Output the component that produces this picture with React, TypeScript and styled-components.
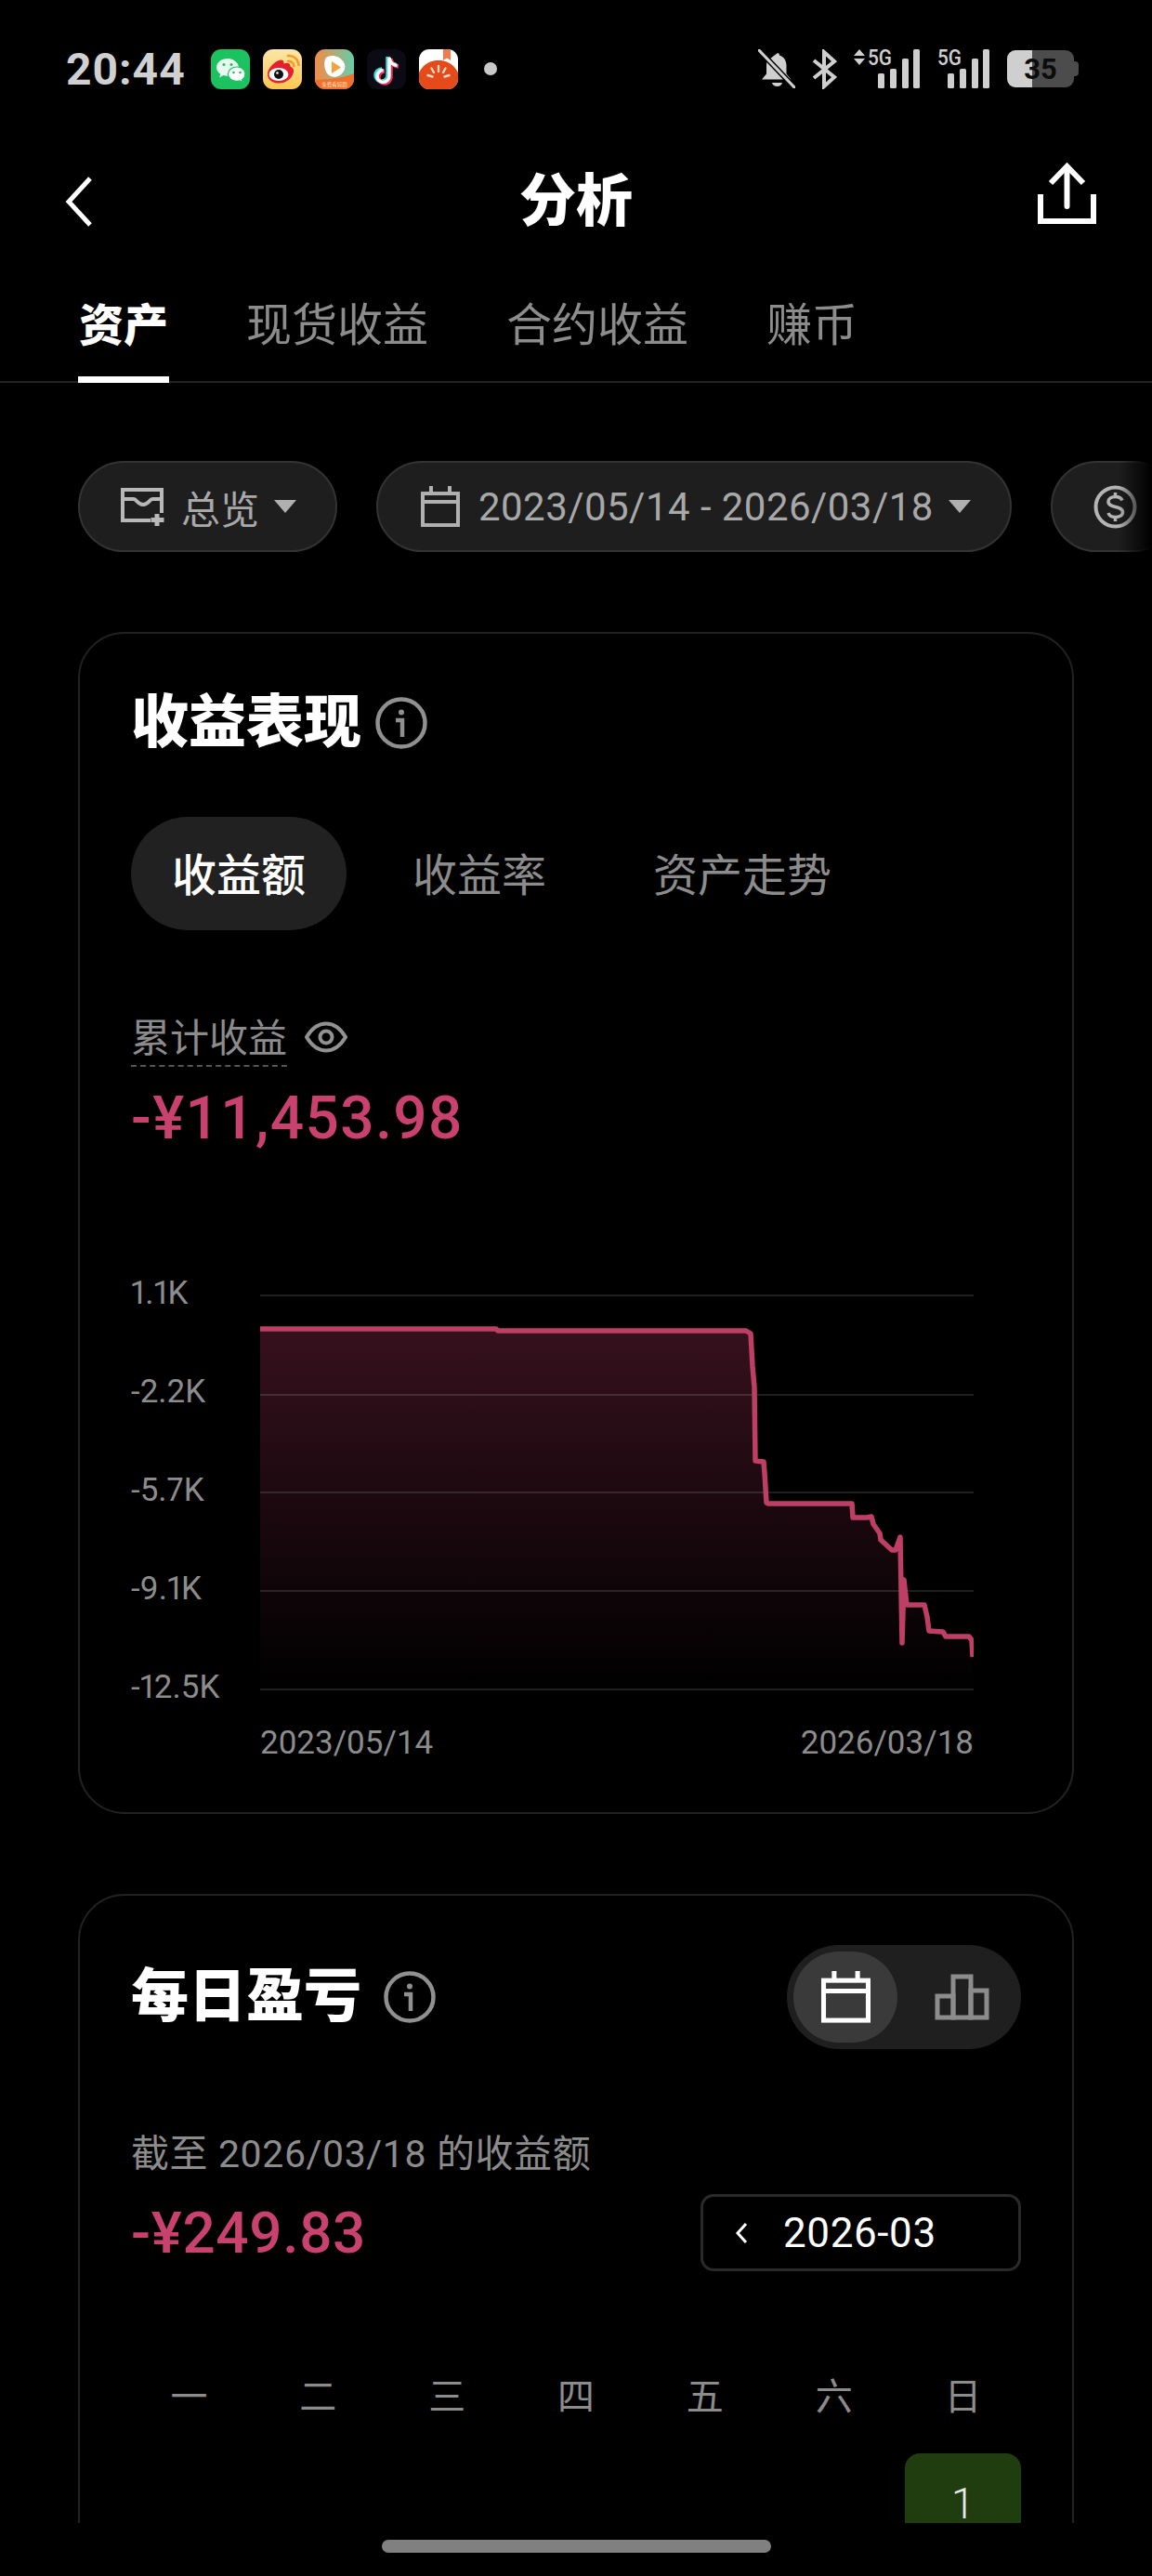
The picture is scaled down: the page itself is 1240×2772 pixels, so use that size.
import React from 'react';
import styled, { createGlobalStyle } from 'styled-components';

const GlobalStyle = createGlobalStyle`
  html, body {
    margin: 0;
    padding: 0;
    background: #000;
  }
  body {
    font-family: Roboto, "Noto Sans CJK SC", sans-serif;
    color: #fff;
  }
  * {
    box-sizing: border-box;
  }
`;

const Page = styled.div`
  display: flex;
  flex-direction: column;
  width: 1240px;
  height: 2772px;
  overflow: hidden;
  background: #000;
`;

const StatusBar = styled.div`
  display: flex;
  flex: none;
  align-items: center;
  justify-content: space-between;
  height: 148px;
  padding: 0 79px 0 71px;
`;

const StatusLeft = styled.div`
  display: flex;
  align-items: center;
`;

const Time = styled.span`
  margin-right: 27px;
  color: #d0d0d0;
  font-size: 48px;
  font-weight: 700;
  letter-spacing: 1px;
`;

const AppIcons = styled.div`
  display: flex;
  gap: 14px;
`;

const MoreDot = styled.span`
  width: 14px;
  height: 14px;
  margin-left: 28px;
  border-radius: 50%;
  background: #c8c8c8;
`;

const StatusRight = styled.div`
  display: flex;
  align-items: center;
  gap: 18px;
  color: #cfcfcf;
`;

const Battery = styled.div`
  position: relative;
  display: flex;
  align-items: center;
  justify-content: center;
  width: 72px;
  height: 40px;
  margin-right: 5px;
  border-radius: 9px;
  background: linear-gradient(90deg, #cfcfcf 0 27px, #4c4c4c 27px 100%);
  color: #0c0c0c;
  font-size: 31px;
  font-weight: 700;

  &::after {
    content: '';
    position: absolute;
    top: 12px;
    right: -5px;
    width: 5px;
    height: 16px;
    border-radius: 0 4px 4px 0;
    background: #4c4c4c;
  }
`;

const Header = styled.div`
  display: grid;
  flex: none;
  grid-template-columns: 1fr auto 1fr;
  align-items: center;
  height: 138px;
  padding: 0 60px;
`;

const BackButton = styled.div`
  height: 56px;
  margin-left: 10px;
`;

const Title = styled.h1`
  margin: 0;
  font-size: 61px;
  font-weight: 900;
  line-height: 70px;
`;

const ShareButton = styled.div`
  justify-self: end;
  height: 66px;
  margin-bottom: 19px;
`;

const TabBar = styled.div`
  display: flex;
  flex: none;
  gap: 84px;
  height: 126px;
  padding-left: 85px;
  border-bottom: 2px solid #232323;
`;

const Tab = styled.div<{ $active?: boolean }>`
  position: relative;
  height: 126px;
  padding-top: 37px;
  color: ${(p) => (p.$active ? '#fff' : '#8c8c8c')};
  font-size: ${(p) => (p.$active ? 48 : 49)}px;
  font-weight: ${(p) => (p.$active ? 900 : 400)};
  line-height: 56px;

  ${(p) => p.$active && `
    &::after {
      content: '';
      position: absolute;
      left: -1px;
      right: -1px;
      bottom: 0;
      height: 7px;
      background: #fff;
    }
  `}
`;

const Content = styled.div`
  flex: 1;
  min-height: 0;
  overflow: hidden;
`;

const FilterRow = styled.div`
  position: relative;
  display: flex;
  gap: 42px;
  height: 98px;
  margin-top: 84px;
  padding-left: 84px;
  overflow: hidden;

  &::after {
    content: '';
    position: absolute;
    top: 0;
    right: 0;
    bottom: 0;
    width: 36px;
    background: linear-gradient(90deg, rgba(0, 0, 0, 0), #000);
  }
`;

const Pill = styled.div<{ $lead?: number }>`
  display: flex;
  flex: none;
  align-items: center;
  height: 98px;
  padding: 0 42px 0 ${(p) => p.$lead ?? 44}px;
  border: 2px solid #333;
  border-radius: 49px;
  background: #1e1e1e;
  color: #a8a8a8;
  font-size: 42px;
  white-space: nowrap;
`;

const PillLabel = styled.span<{ $gap: number; $spacing?: number }>`
  margin: 0 16px 0 ${(p) => p.$gap}px;
  letter-spacing: ${(p) => p.$spacing ?? 0}px;
`;

const Caret = styled.span`
  width: 0;
  height: 0;
  border-left: 12px solid transparent;
  border-right: 12px solid transparent;
  border-top: 14px solid #b0b0b0;
`;

const Card = styled.section<{ $height: number }>`
  width: 1072px;
  height: ${(p) => p.$height}px;
  margin: 86px 0 0 84px;
  padding: 0 55px;
  border: 2px solid #222;
  border-radius: 50px;
`;

const CardTitleRow = styled.div`
  display: flex;
  align-items: center;
  gap: 15px;
  height: 64px;
  margin-top: 64px;
`;

const CardTitle = styled.h2`
  margin: 0;
  font-size: 62px;
  font-weight: 900;
  line-height: 64px;
`;

const Segments = styled.div`
  display: flex;
  gap: 27px;
  margin-top: 69px;
`;

const Segment = styled.div<{ $active?: boolean }>`
  height: 122px;
  padding: 0 44px;
  border-radius: 61px;
  background: ${(p) => (p.$active ? '#212121' : 'transparent')};
  color: ${(p) => (p.$active ? '#fff' : '#8c8c8c')};
  font-size: 48px;
  font-weight: ${(p) => (p.$active ? 500 : 400)};
  line-height: 127px;
`;

const LabelRow = styled.div`
  display: flex;
  align-items: center;
  gap: 19px;
  height: 44px;
  margin-top: 93px;
`;

const DashedLabel = styled.span`
  padding-bottom: 5px;
  border-bottom: 2px dashed #555;
  color: #8c8c8c;
  font-size: 42px;
  line-height: 46px;
  transform: translateY(5px);
`;

const Amount = styled.div<{ $size: number }>`
  color: #c9416e;
  font-size: ${(p) => p.$size}px;
  font-weight: 500;
  letter-spacing: 0.7px;
  line-height: 70px;
`;

const HeroAmount = styled(Amount)`
  margin-top: 31px;
  letter-spacing: 1.4px;
`;

const Chart = styled.div`
  display: grid;
  grid-template-columns: 139px 768px;
  margin-top: 151px;
`;

const YAxis = styled.div`
  display: flex;
  flex-direction: column;
  justify-content: space-between;
  margin: -18px 0 -16px;
  color: #8c8c8c;
  font-size: 35px;
  font-variant-numeric: proportional-nums;
  line-height: 40px;
`;

const Plot = styled.svg`
  display: block;
`;

const XAxis = styled.div`
  display: flex;
  justify-content: space-between;
  width: 768px;
  margin: 34px 0 0 139px;
  color: #8c8c8c;
  font-size: 35px;
  line-height: 44px;
`;

const DailyHeader = styled.div`
  display: flex;
  align-items: center;
  justify-content: space-between;
  margin-top: 53px;
`;

const DailyTitle = styled.div`
  display: flex;
  align-items: center;
  gap: 24px;
`;

const ViewToggle = styled.div`
  display: flex;
  align-items: center;
  width: 252px;
  height: 112px;
  padding: 7px;
  border-radius: 56px;
  background: #1f1f1f;
`;

const ToggleItem = styled.div<{ $active?: boolean }>`
  display: flex;
  align-items: center;
  justify-content: center;
  width: ${(p) => (p.$active ? 112 : 126)}px;
  height: 98px;
  padding-left: ${(p) => (p.$active ? 0 : 12)}px;
  border-radius: 49px;
  background: ${(p) => (p.$active ? '#3a3a3a' : 'transparent')};
  color: ${(p) => (p.$active ? '#fff' : '#8c8c8c')};
`;

const AsOf = styled.div`
  margin-top: 91px;
  color: #8c8c8c;
  font-size: 41px;
  letter-spacing: 0.6px;
  line-height: 44px;
`;

const SummaryRow = styled.div`
  display: flex;
  align-items: center;
  justify-content: space-between;
  height: 83px;
  margin-top: 21px;
`;

const MonthPicker = styled.div`
  display: flex;
  align-items: center;
  gap: 38px;
  width: 345px;
  height: 83px;
  padding-left: 34px;
  border: 3px solid #2a2a2a;
  border-radius: 14px;
  color: #fff;
  font-size: 44px;
  letter-spacing: 0.6px;
`;

const CalendarGrid = styled.div`
  display: grid;
  grid-template-columns: repeat(7, 1fr);
  column-gap: 14px;
  margin-top: 114px;
`;

const Weekday = styled.div`
  color: #8c8c8c;
  font-size: 40px;
  line-height: 44px;
  text-align: center;
`;

const DayCell = styled.div`
  grid-column: 7;
  height: 130px;
  margin-top: 38px;
  padding-top: 35px;
  border-radius: 16px;
  background: #1f3d0f;
  color: #e8e8e8;
  font-size: 46px;
  font-weight: 300;
  line-height: 38px;
  text-align: center;
`;

const HomeArea = styled.div`
  display: flex;
  flex: none;
  justify-content: center;
  height: 57px;
  padding-top: 18px;
`;

const HomeBar = styled.div`
  width: 419px;
  height: 14px;
  border-radius: 7px;
  background: #808080;
`;

const WeChatIcon = () => (
  <svg width={42} height={43} viewBox="0 0 42 43">
    <rect width={42} height={43} rx={11} fill="#1cc25f" />
    <path d="M18 10c-6.600 0-12 4.200-12 9.600 0 3 1.700 5.500 4.200 7.200l-1 3.600 4.200-2.300c1.400.4 2.900.6 4.600.6 6.600 0 12-4.400 12-9.100S24.600 10 18 10z" fill="#e9f9ef" />
    <path d="M28 19c-5.300 0-9.600 3.400-9.600 7.700s4.300 7.700 9.600 7.700c1.100 0 2.200-.2 3.200-.5l3.200 1.800-.8-2.900c2-1.400 3.400-3.600 3.400-6.100 0-4.300-3.700-7.700-9-7.700z" fill="#fff" stroke="#1cc25f" strokeWidth={1.200} />
    <circle cx={14} cy={16.500} r={1.500} fill="#1cc25f" />
    <circle cx={22} cy={16.500} r={1.500} fill="#1cc25f" />
    <circle cx={24.500} cy={25} r={1.300} fill="#1cc25f" />
    <circle cx={31.500} cy={25} r={1.300} fill="#1cc25f" />
  </svg>
);

const WeiboIcon = () => (
  <svg width={42} height={43} viewBox="0 0 42 43">
    <defs>
      <linearGradient id="weiboBg" x1="0" y1="0" x2="0" y2="1">
        <stop offset="0" stopColor="#fbe7a8" />
        <stop offset="1" stopColor="#fcc64f" />
      </linearGradient>
    </defs>
    <rect width={42} height={43} rx={11} fill="url(#weiboBg)" />
    <path d="M5 27c0-6 6-12 11-14.500 4-2 7-1 6.500 3 4-1.500 7.500-.5 7 3 2.500 1 4 3 3.500 6C31.500 32 24 37 16 36.500 9 36 5 32 5 27z" fill="#e4202c" />
    <ellipse cx={17} cy={27} rx={10.500} ry={7} fill="#fff" />
    <circle cx={17} cy={27} r={5} fill="#111" />
    <circle cx={15.500} cy={25.500} r={1.300} fill="#fff" />
    <path d="M27 13c3-.5 6 1.500 6.500 5M27 7c6-.5 11 3.500 11.500 10" fill="none" stroke="#f49a23" strokeWidth={2.600} strokeLinecap="round" />
  </svg>
);

const VideoIcon = () => (
  <svg width={42} height={43} viewBox="0 0 42 43">
    <defs>
      <linearGradient id="videoBg" x1="0" y1="0" x2="1" y2="0">
        <stop offset="0" stopColor="#f58b45" />
        <stop offset="1" stopColor="#66cdaa" />
      </linearGradient>
      <clipPath id="videoClip">
        <rect width={42} height={43} rx={11} />
      </clipPath>
    </defs>
    <g clipPath="url(#videoClip)">
      <rect width={42} height={43} fill="url(#videoBg)" />
      <path d="M0 33c10-1 24 0 42-7v17H0z" fill="#f0702c" />
      <path d="M12 9c5-4 15-2 19 5 3 5 1 10-4 14-5 3-11 2-14-2-3-5-4-13-1-17z" fill="#fff" />
      <path d="M18 13l10 6.500-10 6.500z" fill="#f6a03f" />
      <text x={21} y={40} fontSize={5.500} fill="#ffe3c8" textAnchor="middle">免费看短剧</text>
    </g>
  </svg>
);

const TikTokIcon = () => {
  const note = 'M24 9v20a6.500 6.500 0 1 1-6.500-6.500M24 9c.8 5 4 8 8.500 8.500';
  return (
    <svg width={42} height={43} viewBox="0 0 42 43">
      <rect width={42} height={43} rx={11} fill="#0b0b14" />
      <path d={note} transform="translate(-1.500 -1)" fill="none" stroke="#3fd6dc" strokeWidth={4.500} />
      <path d={note} transform="translate(1.500 1)" fill="none" stroke="#f0305a" strokeWidth={4.500} />
      <path d={note} fill="none" stroke="#fff" strokeWidth={3.500} />
    </svg>
  );
};

const TomatoIcon = () => (
  <svg width={42} height={43} viewBox="0 0 42 43">
    <defs>
      <clipPath id="tomatoClip">
        <rect width={42} height={43} rx={11} />
      </clipPath>
    </defs>
    <g clipPath="url(#tomatoClip)">
      <rect width={42} height={43} fill="#fff" />
      <path d="M0 25C6 14 14 12 21 12s15 2 21 13v18H0z" fill="#e54a1a" />
      <path d="M26 0h8v12l-4-2.500-4 2.500z" fill="#ef7d4a" />
      <path d="M21 18v6M13.500 20.500l2.500 4.500M28.500 20.500L26 25M9.500 28l5 1.500M32.500 28l-5 1.500" stroke="#ffd9c4" strokeWidth={2.400} strokeLinecap="round" />
    </g>
  </svg>
);

const BellOffIcon = () => (
  <svg width={40} height={42} viewBox="0 0 40 42" fill="currentColor">
    <path d="M21 4c1 0 2 1 2 2.500 5 1.500 7.500 6 7.500 11v9l5 6H4l5-6V17c0-1.500.3-3 .8-4.500z" />
    <path d="M15 36h11c-.5 2.500-3 4-5.500 4s-5-1.500-5.500-4z" />
    <path d="M1 1l38 40" stroke="#000" strokeWidth={6} />
    <path d="M1 1l38 40" stroke="currentColor" strokeWidth={3} strokeLinecap="round" />
  </svg>
);

const BluetoothIcon = () => (
  <svg width={27} height={43} viewBox="0 0 27 43" fill="none" stroke="currentColor" strokeWidth={4}>
    <path d="M2 12l22 18-11 10V3l11 10L2 31" />
  </svg>
);

const SignalGlyph = styled.svg`
  margin-top: -6px;
`;

const SignalIcon = ({ withArrows }: { withArrows?: boolean }) => {
  const left = withArrows ? 26 : 11;
  return (
    <SignalGlyph width={left + 46} height={48} viewBox={`0 -6 ${left + 46} 48`} fill="currentColor">
      {withArrows && <path d="M6 0l6 7H0zM6 17l6-7H0z" />}
      {[[0, 26], [13, 21], [26, 10], [38, 0]].map(([x, y]) => (
        <rect key={x} x={left + x} y={y} width={7} height={42 - y} rx={1.500} />
      ))}
      <text x={withArrows ? 15 : 0} y={17} fontFamily="Roboto, sans-serif" fontSize={23} fontWeight={500} textLength={26} lengthAdjust="spacingAndGlyphs">5G</text>
    </SignalGlyph>
  );
};

const BackIcon = () => (
  <svg width={30} height={56} viewBox="0 0 30 56" fill="none" stroke="#fff" strokeWidth={5}>
    <path d="M27 3L4 28l23 25" />
  </svg>
);

const ShareIcon = () => (
  <svg width={63} height={66} viewBox="0 0 63 66" fill="none" stroke="#fff" strokeWidth={6}>
    <path d="M3 34v29h57V34" />
    <path d="M31.500 47V5" strokeLinecap="round" />
    <path d="M14 22L31.500 4 49 22" />
  </svg>
);

const PortfolioIcon = () => (
  <svg width={48} height={42} viewBox="0 0 48 42" fill="none" stroke="#b8b8b8" strokeWidth={4}>
    <path d="M44 28V3H2v33h30" />
    <path d="M2 13h12c3 0 4 6 10 6s7-6 10-6h10" />
    <path d="M39 29v13M32.500 35.500h14" strokeWidth={5} />
  </svg>
);

const CalendarIcon = ({ size, color }: { size: number; color: string }) => (
  <svg width={size} height={size * 1.05} viewBox="0 0 42 44" fill="none" stroke={color} strokeWidth={4}>
    <rect x={2} y={8} width={38} height={34} />
    <path d="M2 17h38M11 0v9M31 0v9" />
  </svg>
);

const DollarIcon = () => (
  <svg width={47} height={47} viewBox="0 0 47 47" fill="none" stroke="#b4b4b4">
    <circle cx={23.500} cy={23.500} r={21} strokeWidth={4} />
    <path d="M31 16.500c-1-2.500-4-4-7.500-4-4 0-7.500 2-7.500 5.500 0 7.500 15.500 3.500 15.500 11 0 3.500-3.500 5.500-8 5.500-3.500 0-6.500-1.500-7.500-4.500M23.500 8v4.500M23.500 34.500V39" strokeWidth={3.500} />
  </svg>
);

const InfoIcon = ({ size }: { size: number }) => (
  <svg width={size} height={size} viewBox="0 0 56 56" fill="none" stroke="#909090" strokeWidth={4.500}>
    <circle cx={28} cy={28} r={25.500} />
    <circle cx={28} cy={16.500} r={3} fill="#909090" stroke="none" />
    <path d="M22 25h7v18" />
  </svg>
);

const EyeIcon = () => (
  <svg width={46} height={34} viewBox="0 0 46 34" fill="none" stroke="#929292" strokeWidth={4}>
    <path d="M2 17C8 7 15 2.500 23 2.500S38 7 44 17c-6 10-13 14.500-21 14.500S8 27 2 17z" />
    <circle cx={23} cy={17} r={6.500} />
  </svg>
);

const BarsIcon = () => (
  <svg width={59} height={50} viewBox="0 0 59 50" fill="none" stroke="currentColor" strokeWidth={5}>
    <rect x={3} y={24} width={17} height={23} />
    <rect x={20} y={3} width={19} height={44} />
    <rect x={39} y={18} width={17} height={29} />
  </svg>
);

const ChevronLeftIcon = () => (
  <svg width={14} height={24} viewBox="0 0 14 24" fill="none" stroke="#fff" strokeWidth={3}>
    <path d="M12 2L3 12l9 10" />
  </svg>
);

const tabs = ['资产', '现货收益', '合约收益', '赚币'];
const yLabels = ['1.1K', '-2.2K', '-5.7K', '-9.1K', '-12.5K'];
const gridYs = [4, 111, 216, 322, 428];
const weekdays = ['一', '二', '三', '四', '五', '六', '日'];

const linePoints = [
  [0, 40], [254, 40], [256, 42], [521, 42], [523, 42], [528, 45], [530, 80], [532, 103], [533, 182],
  [542, 183], [543, 195], [545, 227], [547, 228], [637, 228], [638, 243], [653, 243], [658, 242],
  [660, 250], [667, 260], [668, 267], [680, 278], [684, 278], [689, 264], [691, 378], [693, 310],
  [696, 337], [715, 337], [718, 350], [720, 365], [735, 366], [738, 371], [763, 371], [766, 375], [767, 393],
];
const linePath = linePoints.map(([x, y], i) => `${i ? 'L' : 'M'}${x} ${y}`).join(' ');

export default function App (): React.ReactElement {
  return (
    <>
      <GlobalStyle />
      <Page>
        <StatusBar>
          <StatusLeft>
            <Time>20:44</Time>
            <AppIcons>
              <WeChatIcon />
              <WeiboIcon />
              <VideoIcon />
              <TikTokIcon />
              <TomatoIcon />
            </AppIcons>
            <MoreDot />
          </StatusLeft>
          <StatusRight>
            <BellOffIcon />
            <BluetoothIcon />
            <SignalIcon withArrows />
            <SignalIcon />
            <Battery>35</Battery>
          </StatusRight>
        </StatusBar>

        <Header>
          <BackButton>
            <BackIcon />
          </BackButton>
          <Title>分析</Title>
          <ShareButton>
            <ShareIcon />
          </ShareButton>
        </Header>

        <TabBar>
          {tabs.map((tab, i) => (
            <Tab key={tab} $active={i === 0}>{tab}</Tab>
          ))}
        </TabBar>

        <Content>
          <FilterRow>
            <Pill>
              <PortfolioIcon />
              <PillLabel $gap={17}>总览</PillLabel>
              <Caret />
            </Pill>
            <Pill $lead={46}>
              <CalendarIcon size={42} color="#b0b0b0" />
              <PillLabel $gap={20} $spacing={0.45}>2023/05/14 - 2026/03/18</PillLabel>
              <Caret />
            </Pill>
            <Pill>
              <DollarIcon />
            </Pill>
          </FilterRow>

          <Card $height={1272}>
            <CardTitleRow>
              <CardTitle>收益表现</CardTitle>
              <InfoIcon size={56} />
            </CardTitleRow>
            <Segments>
              <Segment $active>收益额</Segment>
              <Segment>收益率</Segment>
              <Segment>资产走势</Segment>
            </Segments>
            <LabelRow>
              <DashedLabel>累计收益</DashedLabel>
              <EyeIcon />
            </LabelRow>
            <HeroAmount $size={64}>-¥11,453.98</HeroAmount>
            <Chart>
              <YAxis>
                {yLabels.map((label) => (
                  <span key={label}>{label}</span>
                ))}
              </YAxis>
              <Plot width={768} height={430} viewBox="0 0 768 430">
                <defs>
                  <linearGradient id="areaFill" x1="0" y1="0" x2="0" y2="1">
                    <stop offset="0" stopColor="#36111d" />
                    <stop offset="1" stopColor="#000" />
                  </linearGradient>
                </defs>
                <path d={`${linePath} L767 428 L0 428 Z`} fill="url(#areaFill)" />
                {gridYs.map((y) => (
                  <line key={y} x1={0} x2={768} y1={y} y2={y} stroke="rgba(255,255,255,0.12)" strokeWidth={2} />
                ))}
                <path d={linePath} fill="none" stroke="#bd3f66" strokeWidth={5.500} strokeLinejoin="round" />
              </Plot>
            </Chart>
            <XAxis>
              <span>2023/05/14</span>
              <span>2026/03/18</span>
            </XAxis>
          </Card>

          <Card $height={900}>
            <DailyHeader>
              <DailyTitle>
                <CardTitle>每日盈亏</CardTitle>
                <InfoIcon size={56} />
              </DailyTitle>
              <ViewToggle>
                <ToggleItem $active>
                  <CalendarIcon size={53} color="#fff" />
                </ToggleItem>
                <ToggleItem>
                  <BarsIcon />
                </ToggleItem>
              </ViewToggle>
            </DailyHeader>
            <AsOf>截至 2026/03/18 的收益额</AsOf>
            <SummaryRow>
              <Amount $size={62}>-¥249.83</Amount>
              <MonthPicker>
                <ChevronLeftIcon />
                <span>2026-03</span>
              </MonthPicker>
            </SummaryRow>
            <CalendarGrid>
              {weekdays.map((day) => (
                <Weekday key={day}>{day}</Weekday>
              ))}
              <DayCell>1</DayCell>
            </CalendarGrid>
          </Card>
        </Content>

        <HomeArea>
          <HomeBar />
        </HomeArea>
      </Page>
    </>
  );
}
